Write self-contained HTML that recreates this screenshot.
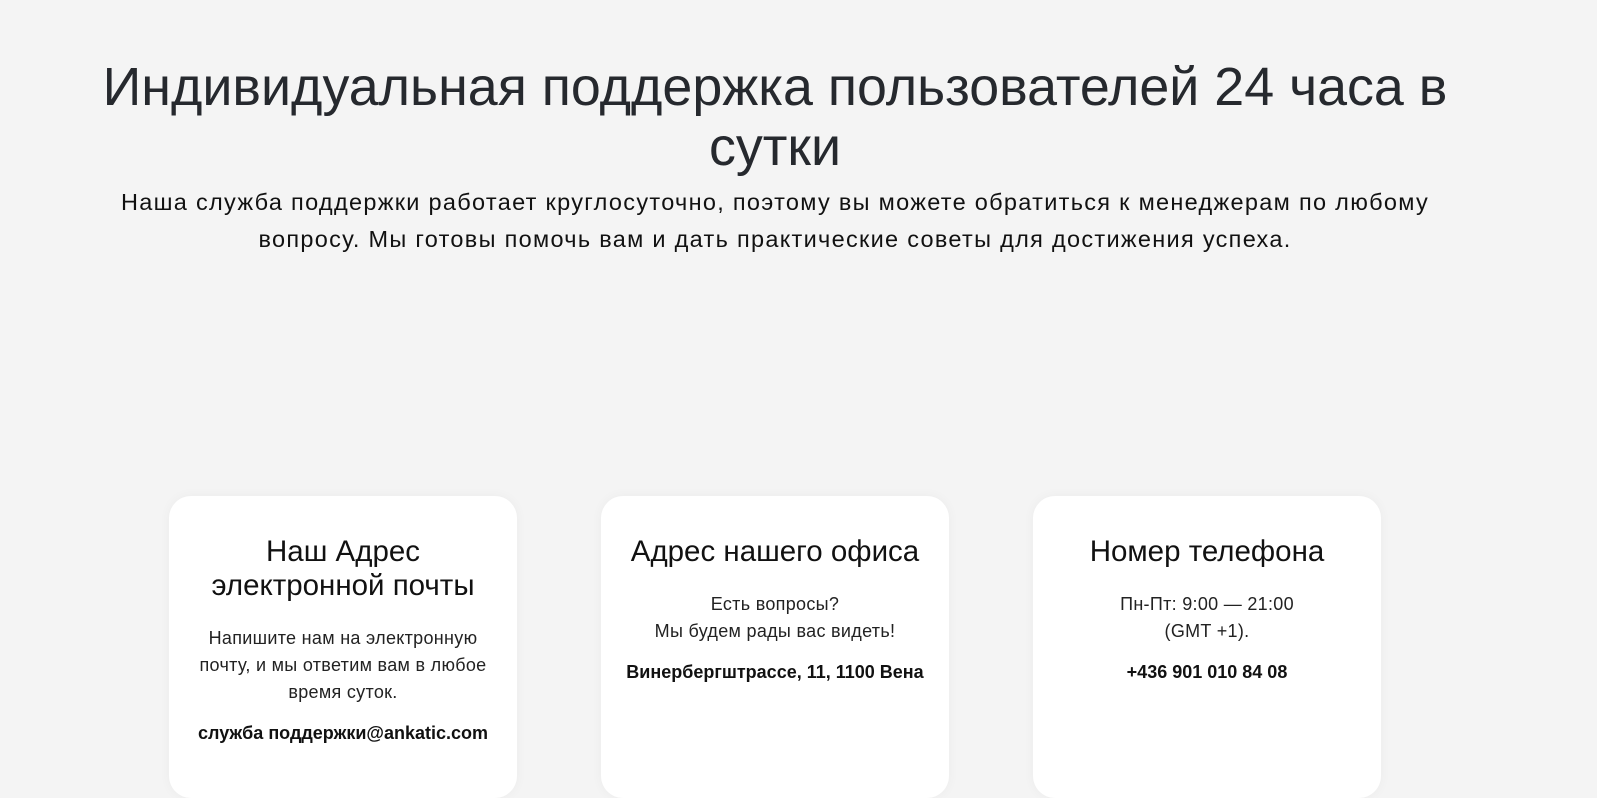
<!DOCTYPE html>
<html><head><meta charset="utf-8"><style>
body{margin:0;background:#f4f4f4;width:1597px;height:798px;overflow:hidden;font-family:"Liberation Sans",sans-serif;}
h1{position:absolute;left:0;width:1550px;top:57px;margin:0;text-align:center;font-weight:400;font-size:53.8px;line-height:60px;color:#26292e;}
.sub{position:absolute;left:0;width:1550px;top:184px;margin:0;text-align:center;font-size:23.5px;letter-spacing:1.3px;line-height:37px;color:#111;}
.card{position:absolute;top:496px;width:348px;height:302px;background:#fff;border-radius:22px;box-shadow:0 0 12px rgba(0,0,0,0.04);text-align:center;color:#111;}
.card h2{margin:39px 14px 0;font-weight:400;font-size:29.5px;line-height:34px;}
.card p{margin:22px 14px 0;font-size:18px;letter-spacing:0.3px;line-height:27px;color:#222;}
.card b{display:block;margin-top:17px;font-size:18px;color:#111;}
</style></head><body>
<h1>Индивидуальная поддержка пользователей 24 часа в<br>сутки</h1>
<p class="sub">Наша служба поддержки работает круглосуточно, поэтому вы можете обратиться к менеджерам по любому<br>вопросу. Мы готовы помочь вам и дать практические советы для достижения успеха.</p>
<div class="card" style="left:169px"><h2>Наш Адрес<br>электронной почты</h2><p>Напишите нам на электронную<br>почту, и мы ответим вам в любое<br>время суток.</p><b>служба поддержки@ankatic.com</b></div>
<div class="card" style="left:601px"><h2>Адрес нашего офиса</h2><p>Есть вопросы?<br>Мы будем рады вас видеть!</p><b>Винербергштрассе, 11, 1100 Вена</b></div>
<div class="card" style="left:1033px"><h2>Номер телефона</h2><p>Пн-Пт: 9:00 — 21:00<br>(GMT +1).</p><b>+436 901 010 84 08</b></div>
</body></html>
